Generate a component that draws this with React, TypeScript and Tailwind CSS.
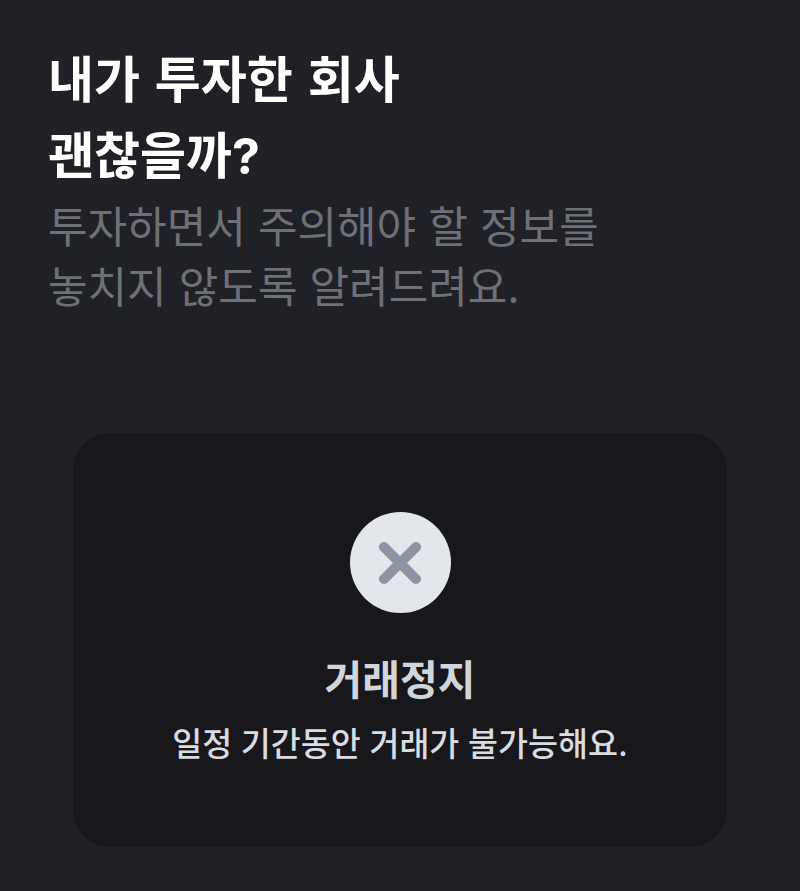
export default function App() {
  return (
    <div className="w-[800px] h-[891px] overflow-hidden bg-[#202126] pl-[48px] pt-[42px] font-['Inter','Noto_Sans_CJK_KR',sans-serif]">
      <h1 className="text-[50px] leading-[76px] font-bold text-white [word-spacing:3px]">내가 투자한 회사<br />괜찮을까?</h1>
      <p className="mt-[3px] text-[43px] leading-[60px] text-[#6e7076]">투자하면서 주의해야 할 정보를<br />놓치지 않도록 알려드려요.</p>
      <div className="mt-[116px] ml-[25px] w-[654px] h-[414px] rounded-[36px] bg-[#18181c] flex flex-col items-center pt-[79px]">
        <div className="w-[101px] h-[101px] rounded-full bg-[#e3e6ea] flex items-center justify-center">
          <svg width="44" height="44" viewBox="0 0 44 44"><path d="M6 6L38 38M38 6L6 38" stroke="#8b95a1" strokeWidth="10" strokeLinecap="round" /></svg>
        </div>
        <div className="mt-[40px] text-[41px] leading-[54px] font-semibold text-[#d1d6db]">거래정지</div>
        <div className="mt-[15px] text-[32.6px] leading-[44px] font-medium text-[#d9dce1]">일정 기간동안 거래가 불가능해요.</div>
      </div>
    </div>
  );
}
